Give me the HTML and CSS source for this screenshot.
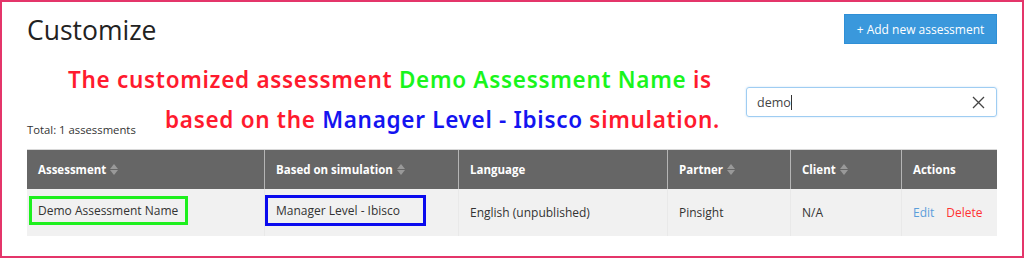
FILE: index.html
```html
<!DOCTYPE html>
<html lang="en">

<head>
    <meta charset="UTF-8">
    <meta name="viewport" content="width=device-width, initial-scale=1.0">
    <title>Customize</title>
    <link rel="stylesheet" href="styles.css">
</head>

<body>
    <div class="frame">
        <div class="page">
            <div class="title-row">
                <h1 class="page-title">Customize</h1>
                <button class="btn-add">+ Add new assessment</button>
            </div>

            <div class="toolbar">
                <!-- Ghi chú chồng lên trang -->
                <div class="note">
                    <div class="note-line first">
                        <span class="red">The customized assessment</span>
                        <span class="green">Demo Assessment Name</span>
                        <span class="red">is</span>
                    </div>
                    <div class="note-line second">
                        <span class="red">based on the</span>
                        <span class="blue">Manager Level - Ibisco</span>
                        <span class="red">simulation.</span>
                    </div>
                </div>

                <div class="search">
                    <span class="search-text">demo</span><span class="caret"></span>
                    <svg class="search-clear" width="13" height="13" viewBox="0 0 13 13">
                        <path d="M1 1 L12 12 M12 1 L1 12" stroke="#444" stroke-width="1.3" fill="none" />
                    </svg>
                </div>
            </div>

            <div class="total">Total: 1 assessments</div>

            <table class="grid">
                <thead>
                    <tr>
                        <th class="col-name">Assessment <span class="sort"></span></th>
                        <th class="col-sim">Based on simulation <span class="sort"></span></th>
                        <th class="col-lang">Language</th>
                        <th class="col-partner">Partner <span class="sort"></span></th>
                        <th class="col-client">Client <span class="sort"></span></th>
                        <th class="col-actions">Actions</th>
                    </tr>
                </thead>
                <tbody>
                    <tr>
                        <td><span class="mark mark-green">Demo Assessment Name</span></td>
                        <td><span class="mark mark-blue">Manager Level - Ibisco</span></td>
                        <td>English (unpublished)</td>
                        <td>Pinsight</td>
                        <td>N/A</td>
                        <td><a class="link-edit">Edit</a><a class="link-delete">Delete</a></td>
                    </tr>
                </tbody>
            </table>
        </div>
    </div>
</body>

</html>
```

FILE: styles.css
```css
body {
    margin: 0;
    padding: 0;
    background: #fff;
    font-family: "Open Sans", Arial, sans-serif;
    color: #333;
}

.frame {
    width: 1024px;
    height: 258px;
    box-sizing: border-box;
    border: 2px solid #e4356a;
    overflow: hidden;
}

.page {
    padding: 12px 25px 0 25px;
}

.title-row {
    display: flex;
    justify-content: space-between;
    align-items: center;
    height: 30px;
}

.page-title {
    margin: 0;
    font-size: 26.5px;
    font-weight: 400;
    line-height: 30px;
    color: #222;
    position: relative;
    top: 1px;
}

.btn-add {
    width: 153px;
    height: 30px;
    border: 1px solid #2f8fd6;
    background: #3a98dc;
    color: #fff;
    font-family: inherit;
    font-size: 12px;
    padding: 0;
}

.toolbar {
    position: relative;
    display: flex;
    justify-content: flex-end;
    margin-top: 43px;
}

.search {
    width: 251px;
    height: 30px;
    box-sizing: border-box;
    border: 1px solid #9fcdf2;
    border-radius: 3px;
    box-shadow: 0 0 2px rgba(80, 160, 230, 0.35);
    display: flex;
    align-items: center;
    padding: 0 11px 0 10px;
    font-size: 12.5px;
    color: #444;
}

.caret {
    display: inline-block;
    width: 1px;
    height: 15px;
    background: #333;
}

.search-clear {
    margin-left: auto;
}

.note {
    position: absolute;
    left: 0;
    top: -27px;
    font-family: "Noto Sans", sans-serif;
    font-weight: 600;
    font-size: 22.5px;
    letter-spacing: 0.7px;
    line-height: 40px;
    white-space: nowrap;
}

.note-line.first {
    margin-left: 41px;
}

.note-line.second {
    margin-left: 138px;
}

.red {
    color: #ff1a2e;
}

.green {
    color: #19f51c;
}

.blue {
    color: #1414f0;
}

.total {
    font-size: 11.3px;
    margin-top: 4px;
    height: 17px;
    line-height: 17px;
}

.grid {
    margin-top: 11px;
    width: 970px;
    border-collapse: collapse;
    table-layout: fixed;
    font-size: 12px;
}

.grid th {
    background: #666;
    color: #fff;
    font-weight: 700;
    font-size: 11.5px;
    text-align: left;
    height: 39px;
    padding: 0 11px;
    border-left: 1px solid #b5b5b5;
    border-top: 1px solid #d8d8d8;
}

.grid th:first-child {
    border-left: none;
}

.grid td {
    background: #f1f1f1;
    height: 47px;
    padding: 0 11px;
    border-left: 1px solid #e9e9e9;
    white-space: nowrap;
}

.grid td:first-child {
    border-left: none;
}

.col-name { width: 215px; }
.col-sim { width: 171px; }
.col-lang { width: 186px; }
.col-partner { width: 100px; }
.col-client { width: 88px; }
.col-actions { width: 73px; }

/* Mũi tên sắp xếp */
.sort {
    display: inline-block;
    position: relative;
    width: 8px;
    height: 11px;
    vertical-align: -1px;
    margin-left: 1px;
}

.sort::before,
.sort::after {
    content: "";
    position: absolute;
    left: 0;
    border-left: 4px solid transparent;
    border-right: 4px solid transparent;
}

.sort::before {
    top: 0;
    border-bottom: 5px solid #999;
}

.sort::after {
    bottom: 0;
    border-top: 5px solid #999;
}

.mark {
    display: inline-block;
    box-sizing: border-box;
    line-height: 23px;
    position: relative;
    top: -2px;
}

.mark-green {
    border: 3px solid #1ef01e;
    width: 159px;
    padding: 0 6px;
    margin-left: -9px;
}

.mark-blue {
    border: 3px solid #0a0aee;
    width: 161px;
    height: 31px;
    line-height: 25px;
    padding: 0 8px;
    margin-left: -11px;
}

.link-edit {
    color: #5b9edb;
    margin-right: 12px;
}

.link-delete {
    color: #ff3333;
}
```
